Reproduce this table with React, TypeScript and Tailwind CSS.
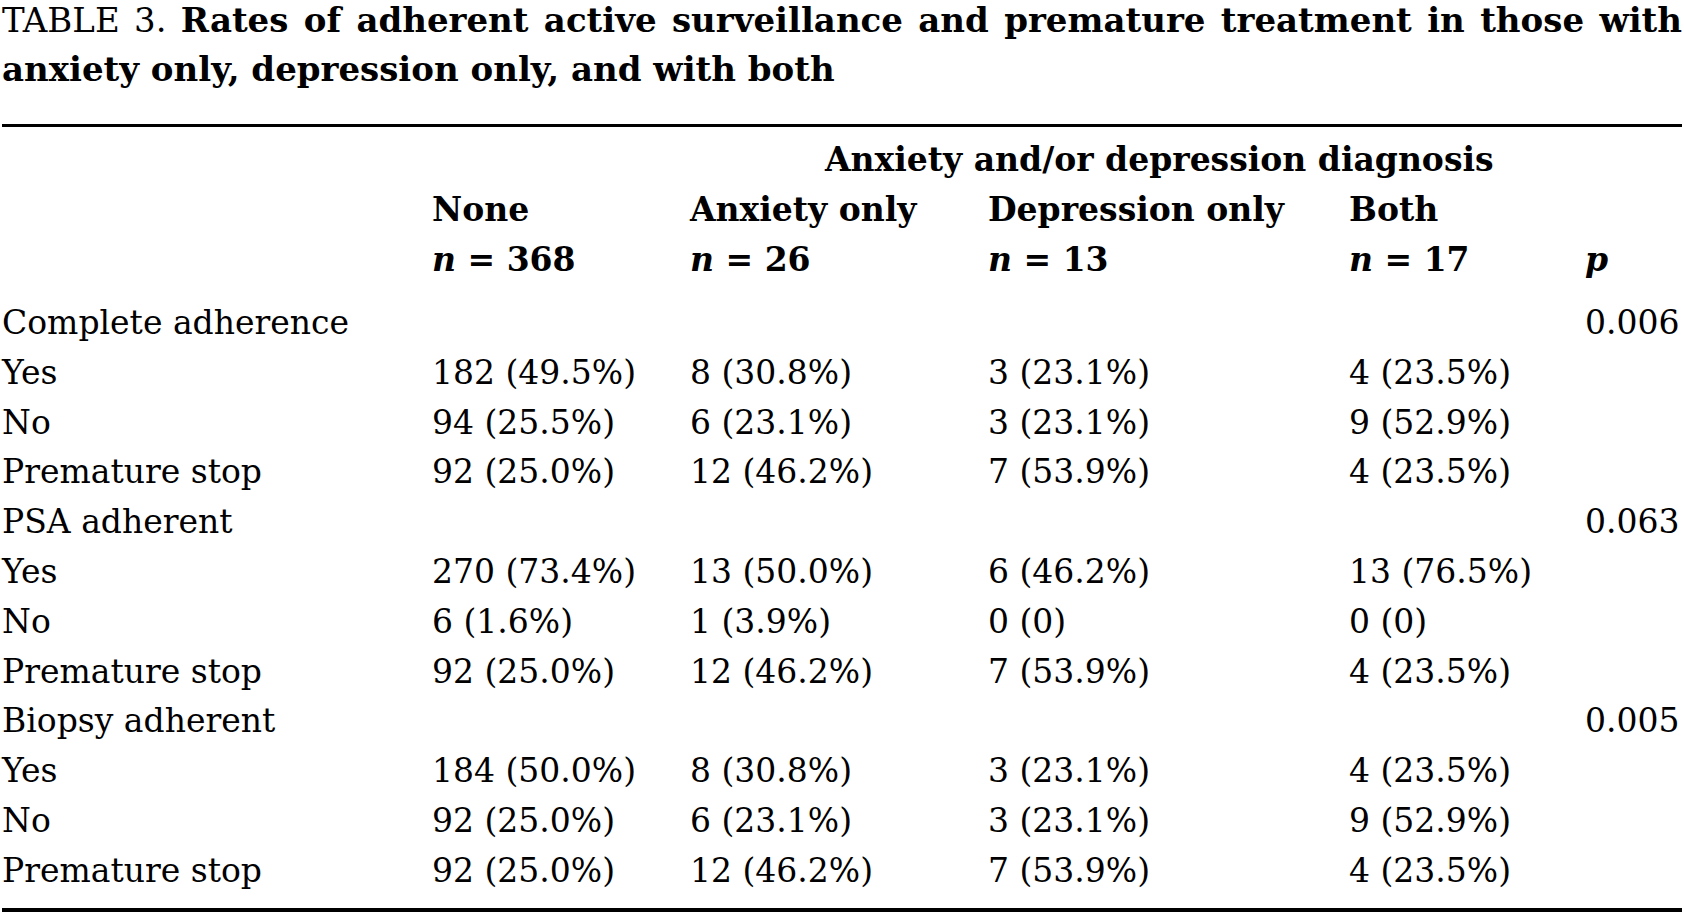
import React from 'react';

type Row = {
    label: string;
    values?: string[];
    p?: string;
};

const rows: Row[] = [
    {label: "Complete adherence", p: "0.006"},
    {label: "Yes", values: ["182 (49.5%)", "8 (30.8%)", "3 (23.1%)", "4 (23.5%)"]},
    {label: "No", values: ["94 (25.5%)", "6 (23.1%)", "3 (23.1%)", "9 (52.9%)"]},
    {label: "Premature stop", values: ["92 (25.0%)", "12 (46.2%)", "7 (53.9%)", "4 (23.5%)"]},
    {label: "PSA adherent", p: "0.063"},
    {label: "Yes", values: ["270 (73.4%)", "13 (50.0%)", "6 (46.2%)", "13 (76.5%)"]},
    {label: "No", values: ["6 (1.6%)", "1 (3.9%)", "0 (0)", "0 (0)"]},
    {label: "Premature stop", values: ["92 (25.0%)", "12 (46.2%)", "7 (53.9%)", "4 (23.5%)"]},
    {label: "Biopsy adherent", p: "0.005"},
    {label: "Yes", values: ["184 (50.0%)", "8 (30.8%)", "3 (23.1%)", "4 (23.5%)"]},
    {label: "No", values: ["92 (25.0%)", "6 (23.1%)", "3 (23.1%)", "9 (52.9%)"]},
    {label: "Premature stop", values: ["92 (25.0%)", "12 (46.2%)", "7 (53.9%)", "4 (23.5%)"]},
];

const groups = [
    {name: "None", n: "368"},
    {name: "Anxiety only", n: "26"},
    {name: "Depression only", n: "13"},
    {name: "Both", n: "17"},
];

// kolumny: etykieta, None, Anxiety, Depression, Both, p
const cols = "grid grid-cols-[430px_258px_298px_361px_236px_1fr]";

export default function App() {
    return (
        <div className="w-[1684px] h-[916px] overflow-hidden bg-white text-black font-['DejaVu_Serif',serif] text-[33px]">
            {/* Tytuł tabeli */}
            <div className="-mt-1 px-[2px] leading-[49px] text-[34px]">
                <div className="whitespace-nowrap text-justify [text-align-last:justify]">
                    <span>TABLE 3. </span>
                    <span className="font-bold">Rates of adherent active surveillance and premature treatment in those with</span>
                </div>
                <div className="whitespace-nowrap font-bold">anxiety only, depression only, and with both</div>
            </div>

            <div className="mx-[2px] mt-[30px] h-[3px] bg-black"></div>

            {/* Nagłówek */}
            <div className="pt-[8px] pl-[2px] leading-[50px] font-bold">
                <div className={cols}>
                    <div></div>
                    <div className="col-span-4 pl-[393px] whitespace-nowrap">Anxiety and/or depression diagnosis</div>
                    <div></div>
                </div>
                <div className={cols}>
                    <div></div>
                    {groups.map((g) => (
                        <div key={g.name} className="whitespace-nowrap">{g.name}</div>
                    ))}
                    <div></div>
                </div>
                <div className={cols}>
                    <div></div>
                    {groups.map((g) => (
                        <div key={g.name} className="whitespace-nowrap">
                            <i>n</i> = {g.n}
                        </div>
                    ))}
                    <div><i>p</i></div>
                </div>
            </div>

            {/* Wiersze */}
            <div className="pt-[13px] pl-[2px] leading-[49.8px]">
                {rows.map((r, i) => (
                    <div key={i} className={cols}>
                        <div className="whitespace-nowrap">{r.label}</div>
                        {r.values
                            ? r.values.map((v, j) => (
                                <div key={j} className="whitespace-nowrap">{v}</div>
                            ))
                            : <><div></div><div></div><div></div><div></div></>}
                        <div className="whitespace-nowrap">{r.p ?? ""}</div>
                    </div>
                ))}
            </div>

            <div className="mx-[2px] mt-[12px] h-[4px] bg-black"></div>
        </div>
    );
}
